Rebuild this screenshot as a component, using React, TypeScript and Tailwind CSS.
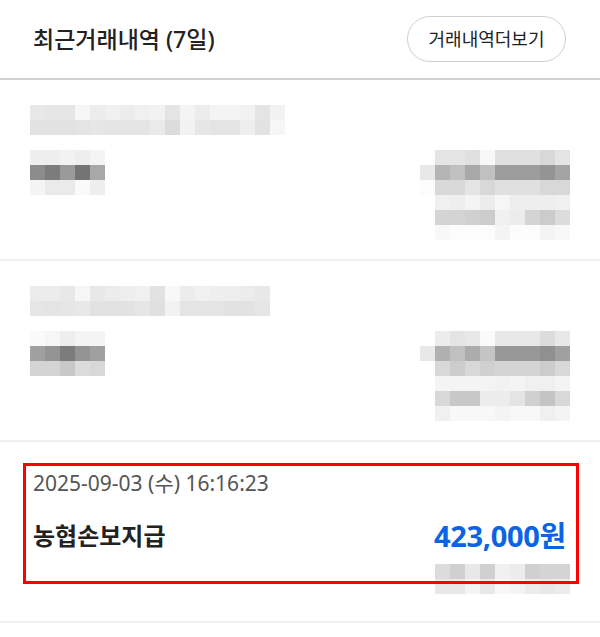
const font = 'font-["Noto_Sans","Noto_Sans_CJK_KR",sans-serif]';

type Grid = string[][];

function Mosaic({ rows, className = '' }: { rows: Grid; className?: string }) {
  return (
    <div className={`flex flex-col ${className}`}>
      {rows.map((row, i) => (
        <div key={i} className="flex">
          {row.map((c, j) => (
            <div key={j} className={`h-[15px] w-[15px] ${c}`} />
          ))}
        </div>
      ))}
    </div>
  );
}

// row 1
const topA: Grid = [
  ['bg-[#e8e8e8]', 'bg-[#e6e6e6]', 'bg-[#e6e6e6]', 'bg-[#f6f6f6]', 'bg-[#ececec]', 'bg-[#f0f0f0]', 'bg-[#ececec]', 'bg-[#f0f0f0]', 'bg-[#f2f2f2]', 'bg-[#e4e4e4]', 'bg-[#f4f4f4]', 'bg-[#ececec]', 'bg-[#f4f4f4]', 'bg-[#f4f4f4]', 'bg-[#f2f2f2]', 'bg-[#e4e4e4]', 'bg-[#f2f2f2]'],
  ['bg-[#e2e2e2]', 'bg-[#e2e2e2]', 'bg-[#e2e2e2]', 'bg-[#e4e4e4]', 'bg-[#e6e6e6]', 'bg-[#e4e4e4]', 'bg-[#e4e4e4]', 'bg-[#e4e4e4]', 'bg-[#eaeaea]', 'bg-[#dcdcdc]', 'bg-[#f2f2f2]', 'bg-[#e6e6e6]', 'bg-[#e4e4e4]', 'bg-[#e4e4e4]', 'bg-[#eeeeee]', 'bg-[#e2e2e2]', 'bg-[#f6f6f6]'],
];
const leftA: Grid = [
  ['bg-[#eeeeee]', 'bg-[#eeeeee]', 'bg-[#f2f2f2]', 'bg-[#eeeeee]', 'bg-[#f4f4f4]'],
  ['bg-[#8c8c8c]', 'bg-[#7c7c7c]', 'bg-[#9a9a9a]', 'bg-[#747474]', 'bg-[#a8a8a8]'],
  ['bg-[#f4f4f4]', 'bg-[#eaeaea]', 'bg-[#eaeaea]', 'bg-[#fafafa]', 'bg-[#eeeeee]'],
];
const rightA: Grid = [
  ['bg-white', 'bg-[#e4e4e4]', 'bg-[#e4e4e4]', 'bg-[#e0e0e0]', 'bg-[#f8f8f8]', 'bg-[#e0e0e0]', 'bg-[#e0e0e0]', 'bg-[#e0e0e0]', 'bg-[#d8d8d8]', 'bg-[#e4e4e4]'],
  ['bg-[#e8e8e8]', 'bg-[#b4b4b4]', 'bg-[#c0c0c0]', 'bg-[#a8a8a8]', 'bg-[#c0c0c0]', 'bg-[#9c9c9c]', 'bg-[#9c9c9c]', 'bg-[#9c9c9c]', 'bg-[#949494]', 'bg-[#a4a4a4]'],
  ['bg-[#fcfcfc]', 'bg-[#d8d8d8]', 'bg-[#d8d8d8]', 'bg-[#e4e4e4]', 'bg-[#d8d8d8]', 'bg-[#e0e0e0]', 'bg-[#e0e0e0]', 'bg-[#e0e0e0]', 'bg-[#d8d8d8]', 'bg-[#d8d8d8]'],
  ['bg-white', 'bg-[#f0f0f0]', 'bg-[#eeeeee]', 'bg-[#f4f4f4]', 'bg-[#ececec]', 'bg-[#f6f6f6]', 'bg-[#eeeeee]', 'bg-[#eeeeee]', 'bg-[#eeeeee]', 'bg-[#f0f0f0]'],
  ['bg-white', 'bg-[#d4d4d4]', 'bg-[#d4d4d4]', 'bg-[#d0d0d0]', 'bg-[#cccccc]', 'bg-[#f0f0f0]', 'bg-[#ececec]', 'bg-[#d4d4d4]', 'bg-[#cccccc]', 'bg-[#dcdcdc]'],
  ['bg-white', 'bg-[#f8f8f8]', 'bg-[#fcfcfc]', 'bg-[#fcfcfc]', 'bg-[#fcfcfc]', 'bg-[#f4f4f4]', 'bg-[#fcfcfc]', 'bg-[#fcfcfc]', 'bg-[#f4f4f4]', 'bg-[#f8f8f8]'],
];

// row 2
const topB: Grid = [
  ['bg-[#ececec]', 'bg-[#ececec]', 'bg-[#e8e8e8]', 'bg-[#f6f6f6]', 'bg-[#e8e8e8]', 'bg-[#ececec]', 'bg-[#eeeeee]', 'bg-[#f0f0f0]', 'bg-[#e2e2e2]', 'bg-[#f8f8f8]', 'bg-[#ececec]', 'bg-[#f0f0f0]', 'bg-[#eeeeee]', 'bg-[#eeeeee]', 'bg-[#ececec]', 'bg-[#e8e8e8]'],
  ['bg-[#e6e6e6]', 'bg-[#e4e4e4]', 'bg-[#e6e6e6]', 'bg-[#e8e8e8]', 'bg-[#e2e2e2]', 'bg-[#e2e2e2]', 'bg-[#e2e2e2]', 'bg-[#e6e6e6]', 'bg-[#e0e0e0]', 'bg-[#f2f2f2]', 'bg-[#e4e4e4]', 'bg-[#e4e4e4]', 'bg-[#e4e4e4]', 'bg-[#e2e2e2]', 'bg-[#e2e2e2]', 'bg-[#e6e6e6]'],
];
const leftB: Grid = [
  ['bg-[#fafafa]', 'bg-[#f6f6f6]', 'bg-[#eeeeee]', 'bg-[#f4f4f4]', 'bg-[#f4f4f4]'],
  ['bg-[#a0a0a0]', 'bg-[#949494]', 'bg-[#7c7c7c]', 'bg-[#949494]', 'bg-[#a0a0a0]'],
  ['bg-[#d4d4d4]', 'bg-[#d4d4d4]', 'bg-[#c8c8c8]', 'bg-[#dcdcdc]', 'bg-[#d8d8d8]'],
];
const rightB: Grid = [
  ['bg-white', 'bg-[#ececec]', 'bg-[#e4e4e4]', 'bg-[#e8e8e8]', 'bg-[#fafafa]', 'bg-[#e8e8e8]', 'bg-[#e8e8e8]', 'bg-[#e8e8e8]', 'bg-[#dcdcdc]', 'bg-[#e8e8e8]'],
  ['bg-[#e8e8e8]', 'bg-[#b0b0b0]', 'bg-[#c0c0c0]', 'bg-[#acacac]', 'bg-[#c4c4c4]', 'bg-[#989898]', 'bg-[#989898]', 'bg-[#989898]', 'bg-[#909090]', 'bg-[#a0a0a0]'],
  ['bg-white', 'bg-[#d8d8d8]', 'bg-[#cccccc]', 'bg-[#d8d8d8]', 'bg-[#d0d0d0]', 'bg-[#d4d4d4]', 'bg-[#d4d4d4]', 'bg-[#d4d4d4]', 'bg-[#cccccc]', 'bg-[#d8d8d8]'],
  ['bg-white', 'bg-[#f4f4f4]', 'bg-[#f4f4f4]', 'bg-[#f4f4f4]', 'bg-[#f4f4f4]', 'bg-[#f2f2f2]', 'bg-[#f4f4f4]', 'bg-[#f0f0f0]', 'bg-[#f0f0f0]', 'bg-[#f4f4f4]'],
  ['bg-white', 'bg-[#d8d8d8]', 'bg-[#c8c8c8]', 'bg-[#c8c8c8]', 'bg-[#ececec]', 'bg-[#ececec]', 'bg-[#e4e4e4]', 'bg-[#d0d0d0]', 'bg-[#c4c4c4]', 'bg-[#d8d8d8]'],
  ['bg-white', 'bg-[#f0f0f0]', 'bg-[#f8f8f8]', 'bg-[#f8f8f8]', 'bg-[#f8f8f8]', 'bg-[#f4f4f4]', 'bg-[#f8f8f8]', 'bg-[#f8f8f8]', 'bg-[#f0f0f0]', 'bg-[#f4f4f4]'],
];

// row 3
const rightC: Grid = [
  ['bg-[#dcdcdc]', 'bg-[#d0d0d0]', 'bg-[#e8e8e8]', 'bg-[#d0d0d0]', 'bg-[#f0f0f0]', 'bg-[#ececec]', 'bg-[#d0d0d0]', 'bg-[#d4d4d4]', 'bg-[#d4d4d4]'],
  ['bg-[#e8e8e8]', 'bg-[#e8e8e8]', 'bg-[#f4f4f4]', 'bg-[#e8e8e8]', 'bg-[#f8f8f8]', 'bg-[#f4f4f4]', 'bg-[#ececec]', 'bg-[#e8e8e8]', 'bg-[#ececec]'],
];

function BlurredRow({ top, left, right }: { top: Grid; left: Grid; right: Grid }) {
  return (
    <div className="h-[181px] border-b-2 border-[#efefef] px-[30px] pt-[25px]">
      <Mosaic rows={top} />
      <div className="mt-[15px] flex items-start justify-between">
        <Mosaic rows={left} />
        <Mosaic rows={right} />
      </div>
    </div>
  );
}

export default function App() {
  return (
    <div className={`w-[600px] h-[637px] bg-white ${font} text-[#222]`}>
      <div className="flex h-[80px] items-center justify-between border-b-2 border-[#d0d0d0] pl-[33px] pr-[34px]">
        <h2 className="text-[23px] font-medium">최근거래내역 (7일)</h2>
        <button className="h-[46px] w-[159px] rounded-full border border-[#cfcfcf] text-[18px]">
          거래내역더보기
        </button>
      </div>

      <BlurredRow top={topA} left={leftA} right={rightA} />
      <BlurredRow top={topB} left={leftB} right={rightB} />

      <div className="relative h-[181px] border-b-2 border-[#efefef] pl-[33px] pr-[34px] pt-[28px]">
        <div className="text-[21px] leading-[26px] text-[#555]">2025-09-03 (수) 16:16:23</div>
        <div className="mt-[22px] flex items-center justify-between">
          <span className="text-[24px] font-bold leading-[36px]">농협손보지급</span>
          <span className="text-[29px] font-bold leading-[36px] text-[#0b63e5] tracking-[-0.3px]">423,000원</span>
        </div>
        <div className="mt-[10px] flex justify-end">
          <Mosaic rows={rightC} className="-mr-[4px]" />
        </div>
        <div className="absolute left-[23px] top-[21px] h-[121px] w-[556px] border-[3px] border-[#ff0000]" />
      </div>
    </div>
  );
}
